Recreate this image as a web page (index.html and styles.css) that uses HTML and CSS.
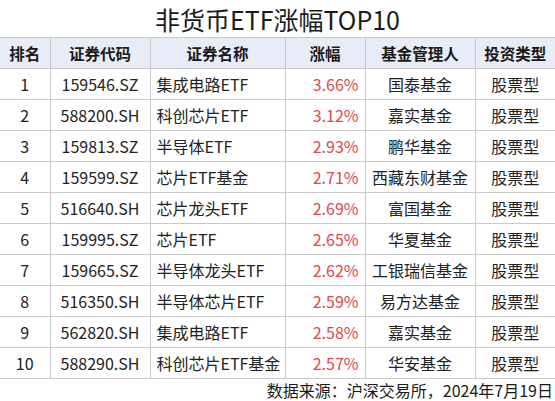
FILE: index.html
```html
<!DOCTYPE html>
<html lang="zh">
<head>
<meta charset="utf-8">
<link rel="stylesheet" href="styles.css">
</head>
<body>
<div class="page">
  <h1 class="title">非货币ETF涨幅TOP10</h1>
  <table class="tbl">
    <colgroup>
      <col class="c1"><col class="c2"><col class="c3"><col class="c4"><col class="c5"><col class="c6">
    </colgroup>
    <thead>
      <tr><th>排名</th><th>证券代码</th><th>证券名称</th><th>涨幅</th><th>基金管理人</th><th>投资类型</th></tr>
    </thead>
    <tbody>
      <tr><td>1</td><td>159546.SZ</td><td class="name">集成电路ETF</td><td class="pct">3.66%</td><td>国泰基金</td><td>股票型</td></tr>
      <tr><td>2</td><td>588200.SH</td><td class="name">科创芯片ETF</td><td class="pct">3.12%</td><td>嘉实基金</td><td>股票型</td></tr>
      <tr><td>3</td><td>159813.SZ</td><td class="name">半导体ETF</td><td class="pct">2.93%</td><td>鹏华基金</td><td>股票型</td></tr>
      <tr><td>4</td><td>159599.SZ</td><td class="name">芯片ETF基金</td><td class="pct">2.71%</td><td>西藏东财基金</td><td>股票型</td></tr>
      <tr><td>5</td><td>516640.SH</td><td class="name">芯片龙头ETF</td><td class="pct">2.69%</td><td>富国基金</td><td>股票型</td></tr>
      <tr><td>6</td><td>159995.SZ</td><td class="name">芯片ETF</td><td class="pct">2.65%</td><td>华夏基金</td><td>股票型</td></tr>
      <tr><td>7</td><td>159665.SZ</td><td class="name">半导体龙头ETF</td><td class="pct">2.62%</td><td>工银瑞信基金</td><td>股票型</td></tr>
      <tr><td>8</td><td>516350.SH</td><td class="name">半导体芯片ETF</td><td class="pct">2.59%</td><td>易方达基金</td><td>股票型</td></tr>
      <tr><td>9</td><td>562820.SH</td><td class="name">集成电路ETF</td><td class="pct">2.58%</td><td>嘉实基金</td><td>股票型</td></tr>
      <tr><td>10</td><td>588290.SH</td><td class="name">科创芯片ETF基金</td><td class="pct">2.57%</td><td>华安基金</td><td>股票型</td></tr>
    </tbody>
  </table>
  <p class="source">数据来源：沪深交易所，2024年7月19日</p>
</div>
</body>
</html>
```
FILE: styles.css
```css
html, body {
  margin: 0;
  padding: 0;
  background: #ffffff;
}
.page {
  width: 555px;
  font-family: "Noto Sans CJK SC", "Noto Sans", sans-serif;
  color: #222222;
}
.title {
  margin: 0;
  height: 37px;
  line-height: 38px;
  font-size: 25px;
  font-weight: normal;
  text-align: center;
  color: #1a1a1a;
}
.tbl {
  width: 555px;
  border-collapse: collapse;
  table-layout: fixed;
  font-size: 16px;
}
.c1 { width: 50px; }
.c2 { width: 100px; }
.c3 { width: 135px; }
.c4 { width: 80px; }
.c5 { width: 110px; }
.c6 { width: 80px; }
.tbl th, .tbl td {
  border: 1px solid #c9c9c9;
  height: 30px;
  padding: 0;
  text-align: center;
  white-space: nowrap;
  line-height: 30px;
}
.tbl th {
  background: #e8ecf6;
  font-weight: bold;
  font-size: 15.5px;
  color: #1a1a1a;
}
.tbl tr > :first-child { border-left: none; }
.tbl tr > :last-child { border-right: none; }
.tbl td.name {
  text-align: left;
  padding-left: 6px;
}
.tbl td.pct {
  text-align: right;
  padding-right: 6px;
  color: #e0474f;
}
.source {
  margin: 0;
  padding-right: 2px;
  text-align: right;
  font-size: 16px;
  line-height: 22px;
  color: #1a1a1a;
}
```
